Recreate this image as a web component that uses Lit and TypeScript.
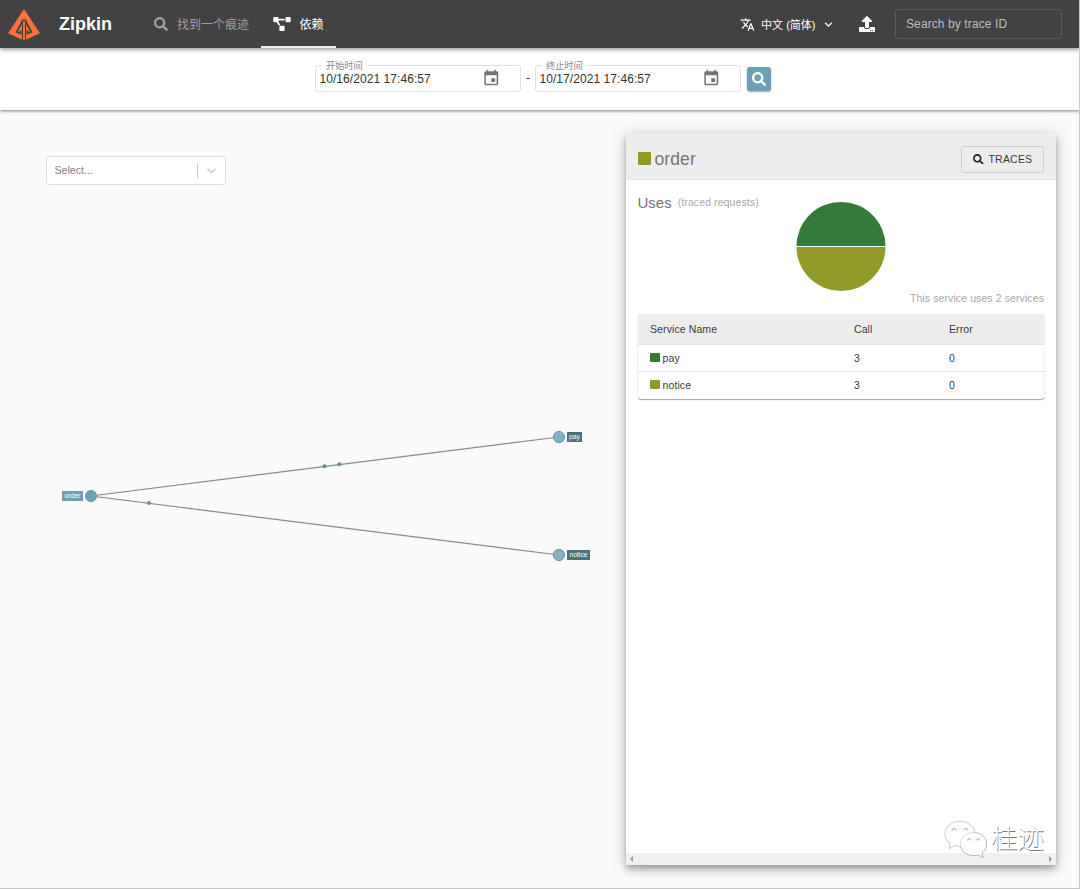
import { LitElement, css, html, svg } from "lit";
import { customElement, property } from "lit/decorators.js";
import { styleMap } from "lit/directives/style-map.js";

interface Glyph {
  box: string;
  path: string;
}

const GLYPHS: Record<string, Glyph> = {
  search: {
    box: "0 0 512 512",
    path: "M505 442.7L405.3 343c-4.5-4.5-10.6-7-17-7H372c27.6-35.3 44-79.7 44-128C416 93.1 322.9 0 208 0S0 93.1 0 208s93.1 208 208 208c48.3 0 92.7-16.4 128-44v16.3c0 6.4 2.5 12.5 7 17l99.7 99.7c9.4 9.4 24.6 9.4 33.9 0l28.3-28.3c9.4-9.4 9.4-24.6.1-34zM208 336c-70.7 0-128-57.2-128-128 0-70.7 57.2-128 128-128 70.7 0 128 57.2 128 128 0 70.7-57.2 128-128 128z",
  },
  diagram: {
    box: "0 0 640 512",
    path: "M384 320H256c-17.67 0-32 14.33-32 32v128c0 17.67 14.33 32 32 32h128c17.67 0 32-14.33 32-32V352c0-17.67-14.33-32-32-32zM192 32c0-17.67-14.33-32-32-32H32C14.33 0 0 14.33 0 32v128c0 17.67 14.33 32 32 32h95.72l73.16 128.04C211.98 300.98 232.4 288 256 288h.28L192 175.51V128h224V64H192V32zM608 0H480c-17.67 0-32 14.33-32 32v128c0 17.67 14.33 32 32 32h128c17.67 0 32-14.33 32-32V32c0-17.67-14.33-32-32-32z",
  },
  upload: {
    box: "0 0 512 512",
    path: "M296 384h-80c-13.3 0-24-10.7-24-24V192h-87.7c-17.8 0-26.7-21.5-14.1-34.1L242.3 5.7c7.5-7.5 19.8-7.5 27.3 0l152.2 152.2c12.6 12.6 3.7 34.1-14.1 34.1H320v168c0 13.3-10.7 24-24 24zm216-8v112c0 13.3-10.7 24-24 24H24c-13.3 0-24-10.7-24-24V376c0-13.3 10.7-24 24-24h136v8c0 30.9 25.1 56 56 56h80c30.9 0 56-25.1 56-56v-8h136c13.3 0 24 10.7 24 24zm-124 88c0-11-9-20-20-20s-20 9-20 20 9 20 20 20 20-9 20-20zm64 0c0-11-9-20-20-20s-20 9-20 20 9 20 20 20 20-9 20-20z",
  },
  translate: {
    box: "0 0 24 24",
    path: "M12.87 15.07l-2.54-2.51.03-.03c1.74-1.94 2.98-4.17 3.71-6.53H17V4h-7V2H8v2H1v1.99h11.17C11.5 7.92 10.44 9.75 9 11.35 8.07 10.32 7.3 9.19 6.69 8h-2c.73 1.63 1.73 3.17 2.98 4.56l-5.09 5.02L4 19l5-5 3.11 3.11.76-2.04zM18.5 10h-2L12 22h2l1.12-3h4.75L21 22h2l-4.5-12zm-2.62 7l1.62-4.33L19.12 17h-3.24z",
  },
  down: {
    box: "0 0 24 24",
    path: "M7.41 8.59L12 13.17l4.59-4.58L18 10l-6 6-6-6 1.41-1.41z",
  },
  event: {
    box: "0 0 24 24",
    path: "M17 12h-5v5h5v-5zM16 1v2H8V1H6v2H5c-1.11 0-1.99.9-1.99 2L3 19c0 1.1.89 2 2 2h14c1.1 0 2-.9 2-2V5c0-1.1-.9-2-2-2h-1V1h-2zm3 18H5V8h14v11z",
  },
  indicator: {
    box: "0 0 20 20",
    path: "M4.516 7.548c0.436-0.446 1.043-0.481 1.576 0l3.908 3.747 3.908-3.747c0.533-0.481 1.141-0.446 1.574 0 0.436 0.445 0.408 1.197 0 1.615-0.406 0.418-4.695 4.502-4.695 4.502-0.217 0.223-0.502 0.335-0.787 0.335s-0.57-0.112-0.789-0.335c0 0-4.287-4.084-4.695-4.502s-0.436-1.17 0-1.615z",
  },
};

/** Single-path icon; sized by the host's width and height. */
@customElement("zk-icon")
export class ZkIcon extends LitElement {
  @property() name = "search";

  static override styles = css`
    :host {
      display: block;
      flex: none;
      width: 14px;
      height: 14px;
    }

    svg {
      display: block;
      width: 100%;
      height: 100%;
      fill: currentColor;
    }
  `;

  override render() {
    const glyph = GLYPHS[this.name];
    return html`<svg viewBox=${glyph.box}><path d=${glyph.path}></path></svg>`;
  }
}

/** Outlined date field with a floating label. */
@customElement("zk-date-field")
export class ZkDateField extends LitElement {
  @property() label = "";
  @property() value = "";

  static override styles = css`
    fieldset {
      box-sizing: border-box;
      display: flex;
      align-items: center;
      justify-content: space-between;
      position: relative;
      width: 206px;
      height: 27px;
      margin: 0;
      padding: 0 19.5px 0 3.5px;
      border: 1px solid #e0e0e0;
      border-radius: 3px;
      color: #333;
      font-size: 12px;
      letter-spacing: 0.06px;
    }

    .label {
      position: absolute;
      top: -6.5px;
      left: 6px;
      padding: 0 4px;
      background: #fff;
      color: #888;
      font-size: 9.2px;
      line-height: 13px;
      letter-spacing: 0;
    }

    .icon {
      width: 18.5px;
      height: 18.5px;
      margin-top: -1px;
      color: #757575;
    }
  `;

  override render() {
    return html`
      <fieldset>
        <span class="label">${this.label}</span>
        <span>${this.value}</span>
        <zk-icon class="icon" name="event"></zk-icon>
      </fieldset>
    `;
  }
}

const NODES = [
  { name: "order", x: 91, y: 311, labelX: 62, labelW: 21, focused: true },
  { name: "pay", x: 559, y: 252, labelX: 567, labelW: 15, focused: false },
  { name: "notice", x: 559, y: 370, labelX: 567, labelW: 23, focused: false },
];

const PARTICLES = [
  [324.5, 281.3],
  [339.4, 279.3],
  [149, 318],
];

/** Service dependency graph. */
@customElement("zk-graph")
export class ZkGraph extends LitElement {
  static override styles = css`
    :host {
      display: block;
    }

    svg {
      display: block;
    }

    .edge {
      stroke: #8a8a8a;
      stroke-width: 1.2;
    }

    .particle {
      fill: #5f8e9f;
    }

    .node {
      fill: #86b1c3;
      stroke: #6497ab;
      stroke-width: 1;
    }

    .node.focused {
      fill: #6ba0b6;
      stroke: #6ba0b6;
    }

    .tag {
      fill: #4a7180;
    }

    .tag.focused {
      fill: #6ba0b6;
    }

    .name {
      fill: #fff;
      font-size: 6.8px;
      text-anchor: middle;
    }
  `;

  override render() {
    const [source, ...targets] = NODES;
    return html`
      <svg width="626" height="700" viewBox="0 0 626 700">
        ${targets.map(
          (t) => svg`<line class="edge" x1=${source.x} y1=${source.y} x2=${t.x} y2=${t.y}></line>`,
        )}
        ${PARTICLES.map(([x, y]) => svg`<circle class="particle" cx=${x} cy=${y} r="2"></circle>`)}
        ${NODES.map((n) => {
          const state = n.focused ? "focused" : "";
          return svg`
            <circle class="node ${state}" cx=${n.x} cy=${n.y} r="5.6"></circle>
            <rect class="tag ${state}" x=${n.labelX} y=${n.y - 5} width=${n.labelW} height="10"></rect>
            <text class="name" x=${n.labelX + n.labelW / 2} y=${n.y + 1.7}>${n.name}</text>
          `;
        })}
      </svg>
    `;
  }
}

const USES = [
  { name: "pay", color: "#347b39", calls: 3, errors: 0 },
  { name: "notice", color: "#909a27", calls: 3, errors: 0 },
];

/** Details of the selected service. */
@customElement("zk-service-detail")
export class ZkServiceDetail extends LitElement {
  static override styles = css`
    :host {
      box-sizing: border-box;
      display: flex;
      flex-direction: column;
      width: 430px;
      height: 732px;
      background: #fff;
      box-shadow:
        0 3px 5px -1px rgba(0, 0, 0, 0.2),
        0 5px 9px 0 rgba(0, 0, 0, 0.2),
        0 1px 16px 0 rgba(0, 0, 0, 0.14);
      color: #3a3a3a;
      font-size: 10.5px;
      letter-spacing: 0.1px;
    }

    .head {
      box-sizing: border-box;
      display: flex;
      align-items: center;
      justify-content: space-between;
      height: 47px;
      padding: 7px 12px 0 11.5px;
      border-bottom: 1px solid #e8e8e8;
      background: #ededed;
    }

    .service {
      display: flex;
      align-items: center;
      gap: 4px;
      color: #757575;
      font-size: 17.5px;
    }

    .swatch {
      width: 13px;
      height: 13px;
      margin-top: -2px;
      border-radius: 1px;
    }

    .traces {
      box-sizing: border-box;
      display: flex;
      align-items: center;
      gap: 5px;
      width: 83px;
      height: 27px;
      padding: 0 0 1px 11px;
      border: 1px solid #cfcfcf;
      border-radius: 3px;
      color: #3a3a3a;
      letter-spacing: 0.2px;
    }

    .traces zk-icon {
      width: 10.5px;
      height: 10.5px;
      color: #222;
    }

    .body {
      flex: 1;
      padding: 12px 12px 0 11.5px;
    }

    .title {
      display: flex;
      align-items: center;
      gap: 6px;
      height: 20px;
      color: #757575;
      font-size: 15px;
      letter-spacing: 0;
    }

    .note {
      color: #a8a8a8;
      font-size: 10.5px;
      letter-spacing: 0.1px;
    }

    .pie {
      display: block;
      margin: -10px auto 0;
    }

    .summary {
      height: 12px;
      margin: 1px 0 9px;
      line-height: 11px;
      text-align: right;
    }

    .table {
      overflow: hidden;
      border-radius: 3px;
      box-shadow:
        0 1px 1px rgba(0, 0, 0, 0.35),
        0 0 1px rgba(0, 0, 0, 0.25);
    }

    .row {
      box-sizing: border-box;
      display: grid;
      grid-template-columns: 204px 95px 1fr;
      align-items: center;
      height: 28px;
      padding: 0 0 1px 12.5px;
      border-top: 1px solid #e4e4e4;
    }

    .row:nth-child(2) {
      height: 27px;
      padding-bottom: 0;
    }

    .row.header {
      height: 30px;
      border-top: 0;
      background: #ededed;
    }

    .cell {
      display: flex;
      align-items: center;
      gap: 3px;
    }

    .dot {
      width: 9.5px;
      height: 9.5px;
      margin-top: -1px;
      border-radius: 1px;
    }

    .scrollbar {
      display: flex;
      align-items: center;
      justify-content: space-between;
      height: 12px;
      padding: 0 4px;
      background: #f0f0f0;
    }

    .arrow {
      border: 3px solid transparent;
      border-right: 3px solid #999;
      border-left: 0;
    }

    .arrow.right {
      border-right: 0;
      border-left: 3px solid #999;
    }
  `;

  override render() {
    return html`
      <div class="head">
        <div class="service">
          <span class="swatch" style=${styleMap({ background: USES[1].color })}></span>
          <span>order</span>
        </div>
        <div class="traces"><zk-icon name="search"></zk-icon><span>TRACES</span></div>
      </div>
      <div class="body">
        <div class="title">Uses <span class="note">(traced requests)</span></div>
        <svg class="pie" width="90" height="90" viewBox="0 0 90 90">
          <path d="M0.5 44a44.5 44 0 0 1 89 0z" fill=${USES[0].color}></path>
          <path d="M0.5 45a44.5 44 0 0 0 89 0z" fill=${USES[1].color}></path>
        </svg>
        <div class="summary note">This service uses 2 services</div>
        <div class="table">
          <div class="row header">
            <span>Service Name</span><span>Call</span><span>Error</span>
          </div>
          ${USES.map(
            (use) => html`
              <div class="row">
                <span class="cell">
                  <span class="dot" style=${styleMap({ background: use.color })}></span>
                  <span>${use.name}</span>
                </span>
                <span>${use.calls}</span>
                <span>${use.errors}</span>
              </div>
            `,
          )}
        </div>
      </div>
      <div class="scrollbar"><span class="arrow"></span><span class="arrow right"></span></div>
    `;
  }
}

@customElement("app-root")
export class AppRoot extends LitElement {
  static override styles = css`
    :host {
      box-sizing: border-box;
      display: flex;
      flex-direction: column;
      position: relative;
      width: 1080px;
      height: 889px;
      overflow: hidden;
      border-right: 1px solid #c8c8c8;
      border-bottom: 1px solid #c8c8c8;
      background: #fafafa;
      font-family: "Liberation Sans", "Noto Sans CJK SC", sans-serif;
    }

    .topbar {
      box-sizing: border-box;
      display: flex;
      align-items: center;
      flex: none;
      z-index: 2;
      width: 1080px;
      height: 48px;
      padding: 0 18px 0 8px;
      background: #424242;
      box-shadow: 0 1px 5px rgba(0, 0, 0, 0.5);
      color: #fff;
      font-size: 12px;
    }

    .logo {
      display: block;
      width: 32px;
      height: 32px;
      margin-top: 1px;
    }

    .brand {
      width: 83px;
      margin-left: 19px;
      font-size: 18px;
      font-weight: bold;
    }

    .tab {
      box-sizing: border-box;
      display: flex;
      align-items: center;
      gap: 9px;
      height: 48px;
      padding: 1px 12px 0;
      border-bottom: 2px solid transparent;
      color: #a0a0a0;
    }

    .tab.active {
      gap: 8.5px;
      width: 75px;
      border-bottom-color: #eee;
      color: #fff;
    }

    .tab.active zk-icon {
      width: 18px;
    }

    .spacer {
      flex: 1;
    }

    .language {
      display: flex;
      align-items: center;
      gap: 6px;
      margin: -1px 23.5px 0 0;
      font-size: 11px;
    }

    .language zk-icon {
      width: 15px;
      height: 15px;
      margin-top: 1px;
    }

    .language zk-icon:last-child {
      margin-left: -1px;
    }

    .upload {
      width: 16px;
      height: 16px;
      margin-right: 20px;
    }

    .trace-id {
      box-sizing: border-box;
      width: 167px;
      height: 30px;
      padding-left: 10px;
      border: 1px solid #5c5c5c;
      border-radius: 3px;
      color: #bdbdbd;
      line-height: 28px;
      letter-spacing: 0.1px;
    }

    .range {
      box-sizing: border-box;
      display: flex;
      align-items: flex-start;
      flex: none;
      z-index: 1;
      width: 1080px;
      height: 62px;
      padding: 17px 0 0 315px;
      background: #fff;
      box-shadow: 0 1px 3px rgba(0, 0, 0, 0.5);
    }

    .dash {
      width: 14px;
      color: #333;
      font-size: 12px;
      line-height: 27px;
      text-align: center;
    }

    .run {
      display: flex;
      align-items: center;
      justify-content: center;
      width: 24px;
      height: 24px;
      margin: 2px 0 0 5.5px;
      border-radius: 3px;
      background: #6ba0b6;
      box-shadow: 0 1px 2px rgba(0, 0, 0, 0.35);
      color: #fff;
    }

    .content {
      display: flex;
      flex: 1;
    }

    .canvas {
      width: 626px;
      padding-top: 46px;
    }

    .select {
      box-sizing: border-box;
      display: flex;
      align-items: center;
      width: 180px;
      height: 29px;
      margin-left: 46px;
      border: 1px solid #dcdcdc;
      border-radius: 3px;
      background: #fff;
      color: #808080;
      font-size: 10.6px;
    }

    .placeholder {
      box-sizing: border-box;
      flex: 1;
      height: 15px;
      padding-left: 7.5px;
      border-right: 1px solid #ccc;
      line-height: 14px;
    }

    .select zk-icon {
      width: 15px;
      height: 15px;
      margin: 0 6px;
      color: #ccc;
    }

    .detail {
      margin-top: 23px;
    }

    .watermark {
      position: absolute;
      left: 944px;
      top: 820px;
      display: flex;
      align-items: center;
      gap: 3px;
      color: #fff;
      font-size: 26.5px;
      font-weight: 300;
      line-height: 38px;
      text-shadow: 0.8px 0.8px 0.6px #777;
    }

    .bubbles {
      filter: drop-shadow(0.4px 0.8px 0.5px #666);
    }
  `;

  override render() {
    return html`
      <div class="topbar">
        <svg class="logo" viewBox="0 0 32 32">
          <path fill="#fe7139" d="M16 0L32 24.2L16 31.5L0 24.2Z"></path>
          <g fill="none" stroke="#424242">
            <path stroke-width="1.8" d="M15.3 10.5L8.7 22.8L12.6 24.4V21.5"></path>
            <path stroke-width="1.8" d="M16.7 10.5L23.3 22.8L19.4 24.4V21.5"></path>
            <path stroke-width="1.2" d="M14.5 11V31.5M17.5 11V31.5"></path>
          </g>
        </svg>
        <span class="brand">Zipkin</span>
        <div class="tab"><zk-icon name="search"></zk-icon><span>找到一个痕迹</span></div>
        <div class="tab active"><zk-icon name="diagram"></zk-icon><span>依赖</span></div>
        <span class="spacer"></span>
        <div class="language">
          <zk-icon name="translate"></zk-icon><span>中文 (简体)</span><zk-icon name="down"></zk-icon>
        </div>
        <zk-icon class="upload" name="upload"></zk-icon>
        <div class="trace-id">Search by trace ID</div>
      </div>
      <div class="range">
        <zk-date-field label="开始时间" value="10/16/2021 17:46:57"></zk-date-field>
        <span class="dash">-</span>
        <zk-date-field label="终止时间" value="10/17/2021 17:46:57"></zk-date-field>
        <div class="run"><zk-icon name="search"></zk-icon></div>
      </div>
      <div class="content">
        <div class="canvas">
          <div class="select">
            <span class="placeholder">Select...</span>
            <zk-icon name="indicator"></zk-icon>
          </div>
          <zk-graph></zk-graph>
        </div>
        <zk-service-detail class="detail"></zk-service-detail>
      </div>
      <div class="watermark">
        <svg class="bubbles" width="44" height="38" viewBox="0 0 44 38">
          <path
            d="M16 1.5C7.5 1.5 1 7 1 14c0 4 2 7.3 5.5 9.7L5 28.5l6-3c1.6.5 3.3.7 5 .7C20 26 31 20 31 12.5C29.5 6 23.5 1.5 16 1.5z"
            fill="#fff"
            stroke="#ddd"
            stroke-width=".5"
          ></path>
          <path
            d="M29.5 12.5c-7.3 0-13 5-13 11.5s5.700 11.500 13 11.500c1.600 0 3.200-.3 4.600-.8l5 2.500-1.300-4.200c3-2.200 4.700-5.400 4.700-9 0-6.500-5.700-11.500-13-11.500z"
            fill="#fff"
            stroke="#bbb"
            stroke-width=".5"
          ></path>
          <path
            d="M8 10.500a2 2 0 0 1 4 0M20 10.500a2 2 0 0 1 4 0M23.500 20.500a1.700 1.700 0 0 1 3.400 0M32.500 20.500a1.700 1.700 0 0 1 3.400 0"
            fill="none"
            stroke="#aaa"
          ></path>
        </svg>
        <span>桂迹</span>
      </div>
    `;
  }
}

declare global {
  interface HTMLElementTagNameMap {
    "zk-icon": ZkIcon;
    "zk-date-field": ZkDateField;
    "zk-graph": ZkGraph;
    "zk-service-detail": ZkServiceDetail;
    "app-root": AppRoot;
  }
}
